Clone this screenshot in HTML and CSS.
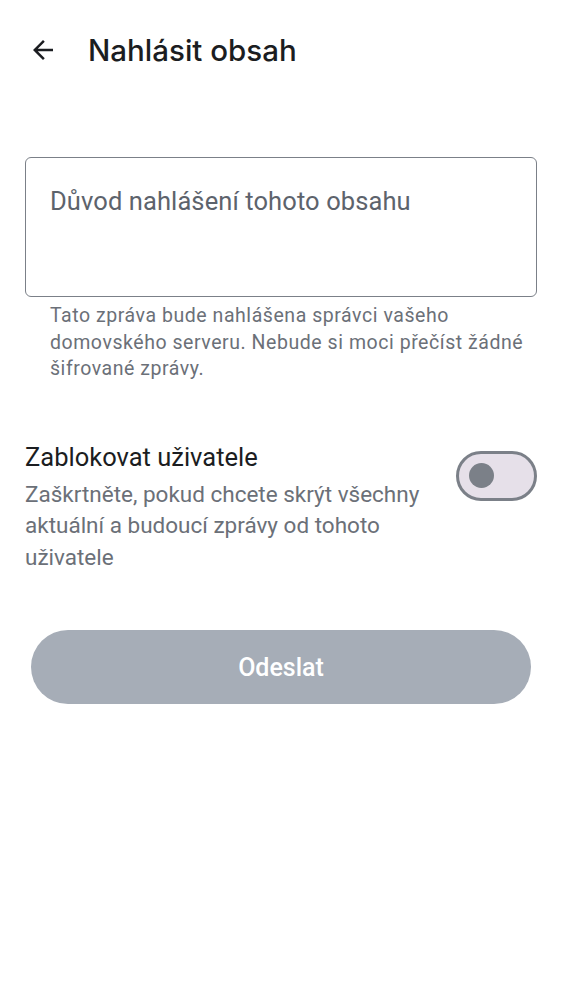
FILE: index.html
```html
<!DOCTYPE html>
<html lang="cs">
<head>
<meta charset="utf-8">
<link rel="stylesheet" href="styles.css">
</head>
<body>
<div class="screen">
  <header class="topbar">
    <svg class="back" width="30" height="30" viewBox="0 0 24 24"><path d="M20 11H7.83l5.59-5.59L12 4l-8 8 8 8 1.41-1.41L7.83 13H20v-2z" fill="#1b1d21"/></svg>
    <h1 class="title">Nahlásit obsah</h1>
  </header>
  <div class="field">
    <div class="input">Důvod nahlášení tohoto obsahu</div>
    <p class="helper">Tato zpráva bude nahlášena správci vašeho domovského serveru. Nebude si moci přečíst žádné šifrované zprávy.</p>
  </div>
  <div class="setting">
    <div class="setting-text">
      <div class="setting-title">Zablokovat uživatele</div>
      <div class="setting-desc">Zaškrtněte, pokud chcete skrýt všechny aktuální a budoucí zprávy od tohoto uživatele</div>
    </div>
    <div class="switch"><div class="knob"></div></div>
  </div>
  <div class="actions">
    <button class="submit">Odeslat</button>
  </div>
</div>
</body>
</html>
```
FILE: styles.css
```css
* { box-sizing: border-box; }
html, body { margin: 0; padding: 0; background: #fff; }
body { font-family: Roboto, "Noto Sans", sans-serif; color: #1b1d21; }
.screen { width: 562px; height: 1000px; }
.topbar { display: flex; align-items: center; height: 100px; padding: 0 0 0 28px; }
.back { display: block; margin-right: 30px; }
.title { margin: 0; font-family: Inter, sans-serif; font-size: 29.5px; font-weight: 500; color: #1b1d21; }
.field { padding: 57px 25px 0 25px; }
.input { height: 140px; border: 1.5px solid #7b8088; border-radius: 6px; padding: 26px 24px; font-size: 25.5px; color: #5d636c; line-height: 34px; letter-spacing: 0.1px; }
.helper { margin: 6px 0 0; padding: 0 0 0 25px; font-size: 19.5px; line-height: 26.5px; color: #6b7078; letter-spacing: 0.55px; }
.setting { display: flex; align-items: flex-start; padding: 56px 25px 0 25px; }
.setting-text { flex: 1; }
.setting-title { font-size: 25.5px; line-height: 32px; color: #1b1d21; margin-top: 2px; }
.setting-desc { font-size: 22.5px; line-height: 31.5px; color: #6b7078; padding-right: 20px; margin-top: 6px; }
.switch { width: 81px; height: 50px; border: 3px solid #7b8088; border-radius: 25px; background: #e6e0e9; display: flex; align-items: center; padding-left: 10px; margin-top: 12px; flex-shrink: 0; }
.knob { width: 25px; height: 25px; border-radius: 50%; background: #7b8088; }
.actions { padding: 57px 31px 0 31px; }
.submit { display: block; width: 100%; height: 74px; border: none; border-radius: 37px; background: #a6adb7; color: #fff; font-family: Roboto, sans-serif; font-size: 25px; font-weight: 500; }
```
